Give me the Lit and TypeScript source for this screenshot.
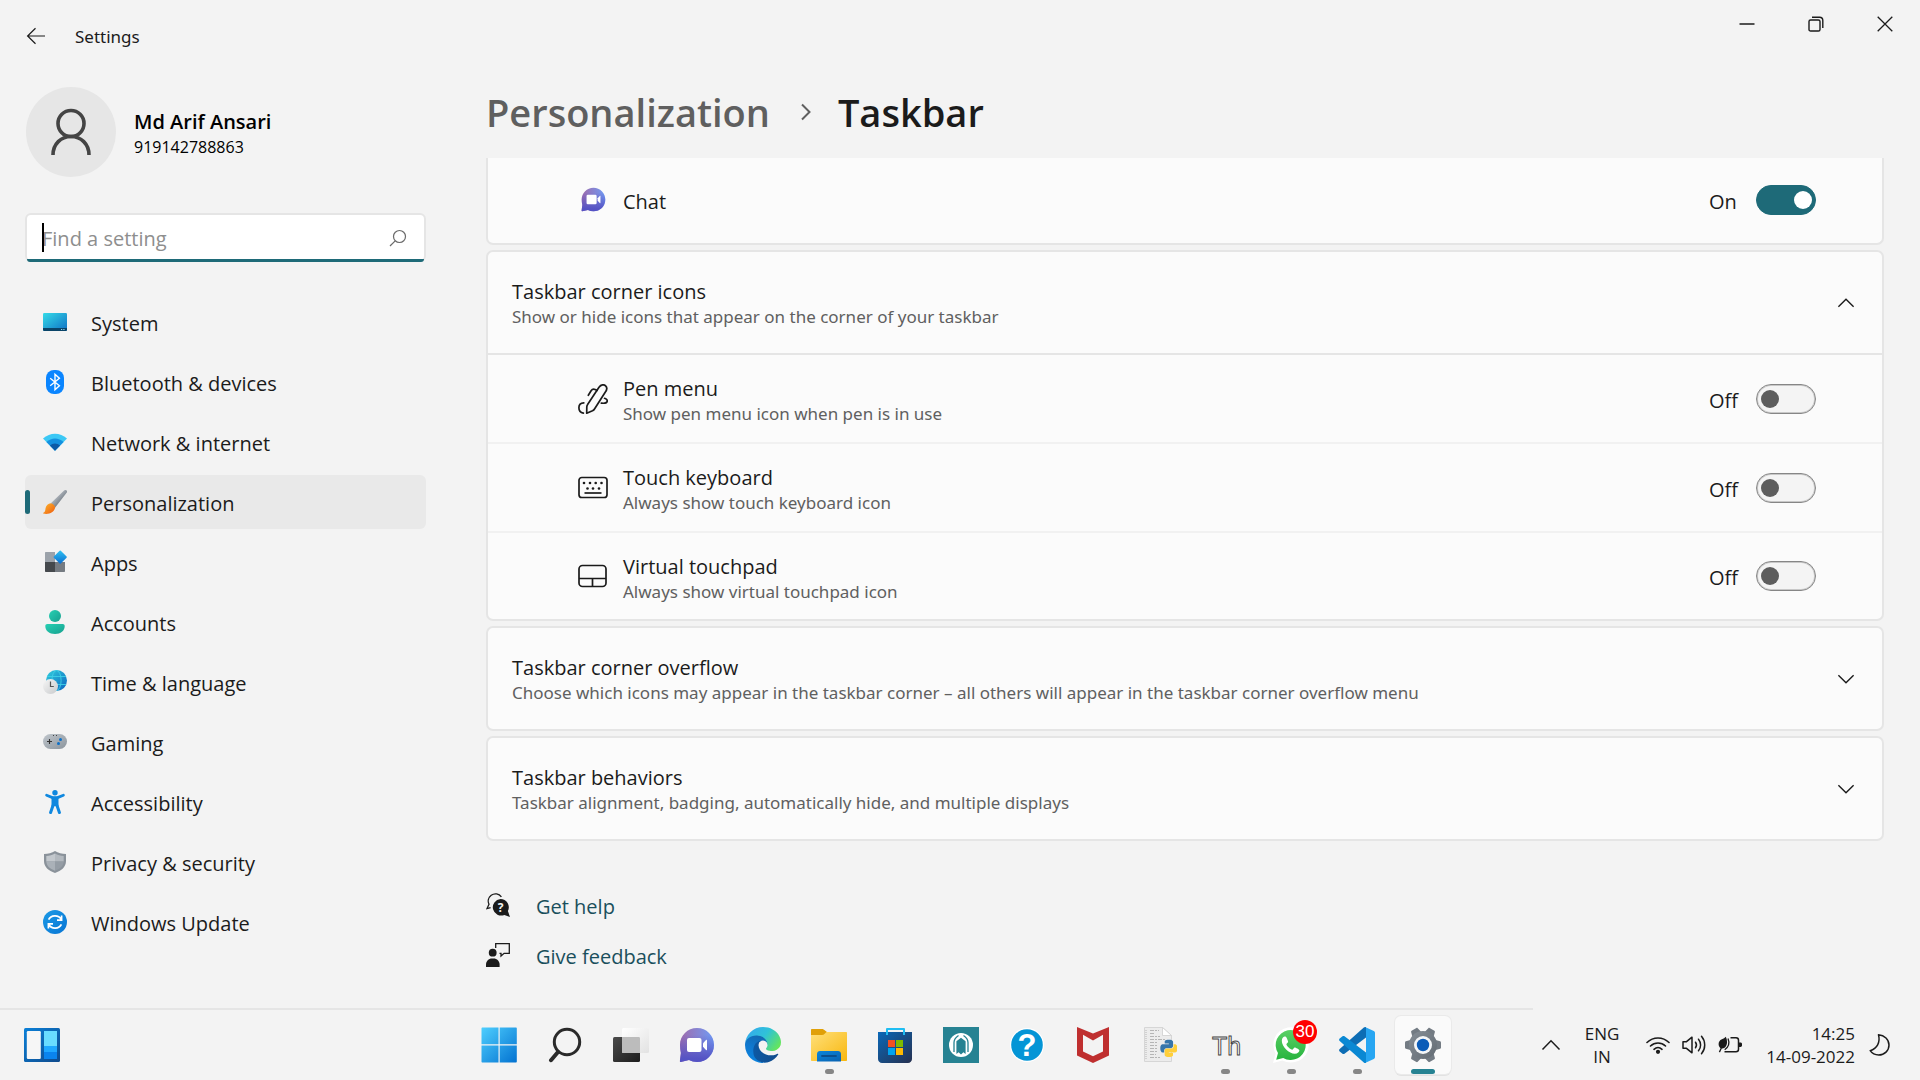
import { LitElement, html, css, svg, TemplateResult, nothing } from "lit";
import { customElement, state } from "lit/decorators.js";
import { classMap } from "lit/directives/class-map.js";

/* ---------- window chrome icons ---------- */

const backIcon = html`<svg width="20" height="20" viewBox="0 0 20 20" fill="none" stroke="#1b1b1b" stroke-width="1.2" aria-hidden="true"><path d="M19 10H2M9.5 2.2 1.6 10l7.9 7.8" /></svg>`;
const minimizeIcon = html`<svg width="16" height="16" viewBox="0 0 16 16" fill="none" stroke="#1b1b1b" stroke-width="1.5" aria-hidden="true"><path d="M.5 8h15" /></svg>`;
const restoreIcon = html`<svg width="16" height="16" viewBox="0 0 16 16" fill="none" stroke="#1b1b1b" stroke-width="1.4" aria-hidden="true"><rect x="1" y="4" width="11" height="11" rx="1.6" /><path d="M4 1.2h7.6c2 0 3.2 1.2 3.2 3.2V12" /></svg>`;
const closeIcon = html`<svg width="16" height="16" viewBox="0 0 16 16" fill="none" stroke="#1b1b1b" stroke-width="1.3" aria-hidden="true"><path d="m.7.7 14.6 14.6M15.3.7.7 15.3" /></svg>`;
const avatarIcon = html`<svg width="42" height="48" viewBox="0 0 42 48" fill="none" stroke="#444" stroke-width="3.6" aria-hidden="true"><circle cx="21" cy="15.5" r="13" /><path d="M3 47C3 36 11 28.500 21 28.500S39 36 39 47" /></svg>`;
const searchIcon = html`<svg width="18" height="18" viewBox="0 0 18 18" fill="none" stroke="#6a6a6a" stroke-width="1.2" aria-hidden="true"><circle cx="10.500" cy="7.500" r="6" /><path d="M6.200 11.800 1 17" /></svg>`;
const crumbIcon = html`<svg width="12" height="18" viewBox="0 0 12 18" fill="none" stroke="#5f5f5f" stroke-width="2" aria-hidden="true"><path d="m2 1.500 7.500 7.500L2 16.500" /></svg>`;
const chevronDown = html`<svg width="18" height="12" viewBox="0 0 18 12" fill="none" stroke="#1b1b1b" stroke-width="1.4" aria-hidden="true"><path d="m1.400 2.300 7.600 7.500 7.600-7.500" /></svg>`;
const chevronUp = html`<svg width="18" height="12" viewBox="0 0 18 12" fill="none" stroke="#1b1b1b" stroke-width="1.4" aria-hidden="true"><path d="M1.400 9.700 9 2.200l7.600 7.500" /></svg>`;

/* ---------- navigation icons ---------- */

const systemIcon = html`<svg width="24" height="24" viewBox="0 0 24 24" aria-hidden="true">
  <defs><linearGradient id="sys" x1="0" y1="0" x2="1" y2="1"><stop offset="0" stop-color="#35dbe8" /><stop offset="1" stop-color="#0e70c4" /></linearGradient></defs>
  <rect y="3" width="24" height="18" rx="1.200" fill="url(#sys)" /><path d="M0 18h24v1.800c0 .7-.5 1.200-1.200 1.200H1.200C.5 21 0 20.500 0 19.800z" fill="#0a4468" />
  <path d="M18 19h1.200v1H18zM20.300 19h1.200v1h-1.200z" fill="#8fd8f2" /></svg>`;
const bluetoothIcon = html`<svg width="24" height="24" viewBox="0 0 24 24" aria-hidden="true">
  <rect x="3" width="18" height="24" rx="8" fill="#0a85ff" /><path d="m7.200 8.300 9.200 7.400-4.400 4V4.300l4.400 4-9.200 7.400" fill="none" stroke="#fff" stroke-width="1.400" /></svg>`;
const networkIcon = html`<svg width="24" height="24" viewBox="0 0 24 24" aria-hidden="true">
  <path d="M0 8.600C7 2.200 17 2.200 24 8.600L12 20.800z" fill="#3cc8f5" /><path d="M3.400 12C8.500 7.300 15.500 7.300 20.600 12L12 20.800z" fill="#1490df" /><path d="M6.900 15.600c3-2.800 7.200-2.800 10.200 0L12 20.800z" fill="#0c5aa6" /></svg>`;
const brushIcon = html`<svg width="24" height="24" viewBox="0 0 24 24" aria-hidden="true">
  <defs><linearGradient id="brh" x1="0" y1="0" x2="1" y2="1"><stop offset="0.300" stop-color="#b9bfc6" /><stop offset="0.700" stop-color="#6f7881" /></linearGradient>
  <linearGradient id="brt" x1="0" y1="0" x2="1" y2="1"><stop offset="0" stop-color="#fdb92d" /><stop offset="1" stop-color="#ee5a10" /></linearGradient></defs>
  <path d="M23.600.4c.7.7.5 1.600 0 2.400L12.200 17.400 7.800 13.200 20.800.7c.9-.8 2.100-1 2.800-.3z" fill="url(#brh)" />
  <path d="M7.800 13.200c2.200.3 4 2 4.400 4.200C11.300 22 6.500 24.800.4 23.600c-.5-.1-.4-.6 0-.8 2-.9 1.700-2.200 2.200-4.800.5-2.700 2.600-4.600 5.200-4.800z" fill="url(#brt)" /></svg>`;
const appsIcon = html`<svg width="24" height="24" viewBox="0 0 24 24" aria-hidden="true">
  <defs><linearGradient id="apd" x1="0" y1="0" x2="1" y2="1"><stop offset="0" stop-color="#2fc3f3" /><stop offset="1" stop-color="#0a6cd0" /></linearGradient></defs>
  <path d="M3 2h9v10H2V3c0-.6.400-1 1-1z" fill="#9ba2aa" /><path d="M2 12h10v10H3c-.6 0-1-.4-1-1z" fill="#45494d" /><path d="M12 12h10v9c0 .6-.4 1-1 1h-9z" fill="#757b82" />
  <rect x="12.300" y="2.200" width="9.800" height="9.800" rx=".8" transform="rotate(45 17.200 7.100)" fill="url(#apd)" /></svg>`;
const accountsIcon = html`<svg width="24" height="24" viewBox="0 0 24 24" aria-hidden="true">
  <defs><linearGradient id="acc" x1="0" y1="0" x2="1" y2="1"><stop offset="0" stop-color="#27d0b4" /><stop offset="1" stop-color="#17a08e" /></linearGradient></defs>
  <circle cx="12" cy="6" r="6" fill="url(#acc)" /><path d="M4.300 14h15.400c1.200 0 2 .8 2 2 0 4.800-4 8-9.700 8s-9.700-3.200-9.700-8c0-1.200.8-2 2-2z" fill="url(#acc)" /></svg>`;
const timeIcon = html`<svg width="24" height="24" viewBox="0 0 24 24" aria-hidden="true">
  <defs><linearGradient id="tgl" x1="0" y1="0" x2="1" y2="1"><stop offset="0" stop-color="#33cfdd" /><stop offset="1" stop-color="#0a63c0" /></linearGradient>
  <linearGradient id="tcl" x1="0" y1="0" x2="1" y2="1"><stop offset="0" stop-color="#f6f6f6" /><stop offset="1" stop-color="#c8cacc" /></linearGradient></defs>
  <circle cx="13.500" cy="10.500" r="10.500" fill="url(#tgl)" /><g fill="none" stroke="#3fd0e6" stroke-width=".9"><ellipse cx="13.500" cy="10.500" rx="4.600" ry="10" /><path d="M4 6.500h19M5 14.500h18" /></g>
  <circle cx="7.500" cy="16.500" r="7.500" fill="url(#tcl)" /><path d="M7.500 11.500v5h3.300" fill="none" stroke="#555" stroke-width="1.200" /></svg>`;
const gamingIcon = html`<svg width="24" height="24" viewBox="0 0 24 24" aria-hidden="true">
  <defs><linearGradient id="gam" x1="0" y1="0" x2="1" y2="1"><stop offset="0" stop-color="#c0c6cc" /><stop offset="1" stop-color="#8b949c" /></linearGradient></defs>
  <rect y="4" width="24" height="15" rx="7.500" fill="url(#gam)" /><path d="M6.500 9v5M4 11.500h5" stroke="#333" stroke-width="1.100" /><circle cx="17.500" cy="9.500" r="1.500" fill="#0c6fc8" /><circle cx="15.500" cy="13.500" r="1.500" fill="#0c6fc8" /><path d="M10 5h1v1h-1zM13 5h1v1h-1z" fill="#444" /></svg>`;
const accessibilityIcon = html`<svg width="24" height="24" viewBox="0 0 24 24" aria-hidden="true">
  <g fill="none" stroke="#1088df" stroke-linecap="round" stroke-linejoin="round"><path d="M3.600 5.300 9.500 7.600h5l5.900-2.300" stroke-width="2.800" /><path d="m10 15.500-2.400 7M14 15.500l2.400 7" stroke-width="3" /></g>
  <path d="M8.500 6.800h7v9.400h-7z" fill="#1088df" /><circle cx="12" cy="2.700" r="2.700" fill="#1088df" /></svg>`;
const shieldIcon = html`<svg width="24" height="24" viewBox="0 0 24 24" aria-hidden="true">
  <path d="M12 1c3 2 7 3 11 3v7c0 6-4.500 9.700-11 12C5.500 20.700 1 17 1 11V4c4 0 8-1 11-3z" fill="#8a929a" /><path d="M12 3.500C9.500 5 6.500 5.800 3.300 6v5.500H12z" fill="#c3c8cd" /><path d="M12 3.500c2.500 1.500 5.500 2.300 8.700 2.500v5.500H12z" fill="#b3b9bf" /><path d="M3.300 11.500c.3 4.300 3.200 7 8.700 9.200v-9.200z" fill="#aab1b8" /><path d="M20.700 11.500c-.3 4.300-3.200 7-8.700 9.200v-9.200z" fill="#959da5" /></svg>`;
const updateIcon = html`<svg width="24" height="24" viewBox="0 0 24 24" aria-hidden="true">
  <defs><linearGradient id="upd" x1="0" y1="0" x2="1" y2="1"><stop offset="0" stop-color="#1b9ae6" /><stop offset="1" stop-color="#0775d4" /></linearGradient></defs>
  <circle cx="12" cy="12" r="12" fill="url(#upd)" /><g fill="none" stroke="#fff" stroke-width="1.700"><path d="M5.600 9.700C7.800 5 15.500 4.500 18.300 9.500M18.600 5.600v4.600H14" /><path d="M18.400 14.300C16.200 19 8.500 19.500 5.700 14.500M5.400 18.400v-4.600H10" /></g></svg>`;

/* ---------- content icons ---------- */

const chatGlyph = (id: string, size: number): TemplateResult => html`<svg width=${size} height=${size} viewBox="0 0 36 36" aria-hidden="true">
  <defs><linearGradient id="${id}a" x1="0" y1="0" x2="1" y2="0"><stop offset="0" stop-color="#a06bab" /><stop offset="1" stop-color="#6f9bf5" /></linearGradient>
  <linearGradient id="${id}b" x1="0" y1="0" x2="0" y2="1"><stop offset="0.200" stop-color="#5553c4" stop-opacity="0" /><stop offset="0.900" stop-color="#5553c4" /></linearGradient></defs>
  <path d="M18 1c9.500 0 17 7.500 17 17s-7.500 17-17 17c-2.800 0-5.500-.7-8-1.900L1.800 35c-.7.100-1-.3-.9-1l1-8C1.300 23.500 1 20.800 1 18 1 8.500 8.500 1 18 1z" fill="url(#${id}a)" />
  <path d="M18 1c9.500 0 17 7.500 17 17s-7.500 17-17 17c-2.800 0-5.500-.7-8-1.900L1.800 35c-.7.100-1-.3-.9-1l1-8C1.300 23.500 1 20.800 1 18 1 8.500 8.500 1 18 1z" fill="url(#${id}b)" />
  <rect x="8" y="11" width="14.500" height="14" rx="2" fill="#fff" /><path d="M24 16.200 27 13c.5-.5 1-.3 1 .4v9.200c0 .7-.5.900-1 .4l-3-3.200z" fill="#fff" /></svg>`;
const penIcon = html`<svg width="30" height="30" viewBox="0 0 30 30" fill="none" stroke="#1b1b1b" stroke-width="1.700" stroke-linejoin="round" stroke-linecap="round" aria-hidden="true">
  <path d="M21 3.200c2-2.600 5-3 6.600-1.400 1.700 1.700 1.300 4.300-.4 6.500L16.500 25c-.5.900-1.200 1.400-2 1.800L8.700 29.200 8.800 23c0-1 .3-1.800.8-2.500z" />
  <path d="m10.300 11.300 2.800-4.500c.9-1.400 2.400-1.900 4-1.300l2 .9" /><path d="M5.800 18.900C3 19 .9 20.800.9 23.700c0 2.800 1.600 4.900 4.500 5.400" /><path d="M26.600 14.300c2.200.8 3 2 2.500 3.300-.6 1.500-2.600 1.900-5.800 1.500" /></svg>`;
const keyboardIcon = html`<svg width="30" height="30" viewBox="0 0 30 30" fill="none" stroke="#1b1b1b" stroke-width="1.700" aria-hidden="true">
  <rect x="1" y="4.500" width="28" height="20" rx="2.800" /><path d="M6.500 20h17" /><g fill="#1b1b1b" stroke="none"><circle cx="6" cy="10" r="1.300" /><circle cx="12" cy="10" r="1.300" /><circle cx="17.700" cy="10" r="1.300" /><circle cx="23.500" cy="10" r="1.300" /><circle cx="9.500" cy="15.500" r="1.300" /><circle cx="15" cy="15.500" r="1.300" /><circle cx="21" cy="15.500" r="1.300" /></g></svg>`;
const touchpadIcon = html`<svg width="30" height="30" viewBox="0 0 30 30" fill="none" stroke="#1b1b1b" stroke-width="1.700" aria-hidden="true"><rect x="1" y="4.500" width="27" height="21" rx="3.500" /><path d="M1 17.500h27M14.500 17.500v8" /></svg>`;
const helpIcon = html`<svg width="24" height="24" viewBox="0 0 24 24" aria-hidden="true">
  <path d="M15.400 3.800C13 .6 8.600-.2 5.200 2.200 2.400 4.300 1.400 8 3 11.200L1 15.600l3.600-1" fill="none" stroke="#1b1b1b" stroke-width="1.300" />
  <path d="M14.500 6a8.300 8.300 0 0 1 7.400 12.100l2.100 5.800-5.600-2A8.300 8.300 0 1 1 14.500 6z" fill="#1b1b1b" /><text x="14.500" y="18.800" font-family="Open Sans, sans-serif" font-weight="700" font-size="12" fill="#f3f3f3" text-anchor="middle">?</text></svg>`;
const feedbackIcon = html`<svg width="24" height="24" viewBox="0 0 24 24" aria-hidden="true">
  <path d="M9.700 5V.7h13.600v9.600h-5.200L15 13v-2.700h-1.500" fill="none" stroke="#1b1b1b" stroke-width="1.300" /><circle cx="6.700" cy="9.700" r="3.900" fill="#1b1b1b" /><path d="M0 24v-2.500C0 18 2.600 15.400 6 15.400h1.600c3.400 0 6 2.600 6 6.100V24z" fill="#1b1b1b" /></svg>`;

/* ---------- taskbar icons ---------- */

const widgetsIcon = html`<svg width="36" height="36" viewBox="0 0 36 36" aria-hidden="true">
  <defs><linearGradient id="wid" x1="0" y1="0" x2="1" y2="1"><stop offset="0" stop-color="#0a80d8" /><stop offset="1" stop-color="#0f4a8c" /></linearGradient></defs>
  <rect y="1" width="36" height="34" rx="1.500" fill="url(#wid)" /><rect x="2.800" y="4" width="14" height="28" rx="1.200" fill="#f6f6f6" /><path d="M20 4h13v15H20z" fill="#69dcff" /><path d="M20 19h13v6H20z" fill="#1fa8ff" /><path d="M20 25h13v7H20z" fill="#0a84ee" /></svg>`;
const startIcon = html`<svg width="36" height="36" viewBox="0 0 36 36" aria-hidden="true">
  <defs><linearGradient id="sta" gradientUnits="userSpaceOnUse" x1="0" y1="0" x2="36" y2="36"><stop offset="0" stop-color="#4fd0ff" /><stop offset="1" stop-color="#0271d0" /></linearGradient></defs>
  <path fill="url(#sta)" d="M1.500.5h16v16.800H.5V1.500c0-.6.400-1 1-1zM18.700.5h16.100c.6 0 1 .4 1 1v15.800H18.700zM.5 18.600h17v16.900h-16c-.6 0-1-.4-1-1zM18.700 18.600h17.100v15.900c0 .6-.4 1-1 1H18.700z" /></svg>`;
const magnifierIcon = html`<svg width="36" height="36" viewBox="0 0 36 36" fill="none" stroke="#2a2a2a" aria-hidden="true"><circle cx="20" cy="15" r="12.700" stroke-width="3" /><path d="m11 25-7 8.200" stroke-width="4" stroke-linecap="round" /></svg>`;
const taskViewIcon = html`<svg width="36" height="36" viewBox="0 0 36 36" aria-hidden="true">
  <defs><linearGradient id="tv1" x1="0" y1="0" x2="1" y2="1"><stop offset="0" stop-color="#4b4b4b" /><stop offset="1" stop-color="#1c1c1c" /></linearGradient>
  <linearGradient id="tv2" x1="0" y1="0" x2="1" y2="1"><stop offset="0" stop-color="#fff" /><stop offset="1" stop-color="#e2e2e2" /></linearGradient></defs>
  <rect x="0" y="10" width="27" height="25" rx="1.500" fill="url(#tv1)" /><rect x="9" y="1" width="27" height="25" rx="1.500" fill="url(#tv2)" /><path d="M9 10h16.500c1 0 1.500.5 1.500 1.500V26H10.500C9.500 26 9 25.500 9 24.500z" fill="#bcbcbc" /></svg>`;
const edgeIcon = html`<svg width="36" height="36" viewBox="4.630 4.920 256 256" aria-hidden="true">
  <defs><linearGradient id="ed1" x1="0" y1="0" x2="1" y2="0"><stop offset="0" stop-color="#0c59a4" /><stop offset="1" stop-color="#114a8b" /></linearGradient>
  <linearGradient id="ed2" x1=".6" y1="0" x2=".3" y2="1"><stop offset="0" stop-color="#1467ae" /><stop offset=".5" stop-color="#0f78cf" /><stop offset="1" stop-color="#0a84e0" /></linearGradient>
  <linearGradient id="ed3" x1="0" y1=".2" x2="1" y2=".7"><stop offset="0" stop-color="#35a8ee" /><stop offset=".5" stop-color="#2fc2d8" /><stop offset="1" stop-color="#66e65a" /></linearGradient></defs>
  <path fill="url(#ed2)" d="M110.340 246.340A79.200 79.200 0 0 1 87.600 225a80.720 80.720 0 0 1 29.530-120c3.120-1.470 8.450-4.130 15.540-4a32.350 32.350 0 0 1 25.690 13 31.880 31.880 0 0 1 6.360 18.660c0-.21 24.460-79.600-80-79.600-43.900 0-80 41.660-80 78.210a130.150 130.150 0 0 0 12.110 56 128 128 0 0 0 156.380 67.110 75.550 75.550 0 0 1-62.780-8z" />
  <path fill="url(#ed1)" d="M235.680 195.460a93.730 93.730 0 0 1-10.540 4.710 101.870 101.870 0 0 1-35.900 6.460c-47.320 0-88.540-32.550-88.540-74.320A31.480 31.480 0 0 1 117.130 105c-42.800 1.800-53.800 46.400-53.800 72.530 0 73.880 68.090 81.370 82.760 81.370 7.910 0 19.840-2.300 27-4.560l1.310-.44a128.340 128.340 0 0 0 66.600-52.800 4 4 0 0 0-5.320-5.640z" />
  <path fill="url(#ed3)" d="M156.940 153.780c-.81 1.050-3.300 2.500-3.300 5.660 0 2.610 1.700 5.120 4.720 7.230 14.380 10 41.490 8.680 41.560 8.680a59.560 59.560 0 0 0 30.270-8.350 61.380 61.380 0 0 0 30.430-52.880c.26-22.410-8-37.310-11.340-43.910C228.090 28.760 182.350 4.920 132.610 4.920a128 128 0 0 0-128 126.200c.48-36.540 36.800-66.050 80-66.050 3.500 0 23.460.34 42 10.070 16.340 8.580 24.900 18.940 30.850 29.210 6.180 10.670 7.280 24.150 7.280 29.520s-2.740 13.330-7.800 19.910z" /></svg>`;
const explorerIcon = html`<svg width="36" height="36" viewBox="0 0 36 36" aria-hidden="true">
  <defs><linearGradient id="fol" x1="0" y1="0" x2="1" y2="1"><stop offset="0" stop-color="#ffe07a" /><stop offset="1" stop-color="#f8b70f" /></linearGradient>
  <linearGradient id="fob" x1="0" y1="0" x2="1" y2="1"><stop offset="0" stop-color="#0a86dc" /><stop offset="1" stop-color="#0a62b0" /></linearGradient></defs>
  <path d="M1 2h10c1 0 1.500.3 2 .8L16 5v5H0V3c0-.6.400-1 1-1z" fill="#e0a008" /><path d="M0 8h11c1 0 2-.4 2.700-1.200L15.500 5H35c.6 0 1 .4 1 1v27c0 .600-.4 1-1 1H1c-.6 0-1-.4-1-1z" fill="url(#fol)" />
  <path d="M9 24h18c1.700 0 3 1.300 3 3v7.500H6V27c0-1.700 1.300-3 3-3z" fill="url(#fob)" /><path d="M11 29h14" stroke="#0a4f8e" stroke-width="1.800" stroke-linecap="round" /></svg>`;
const storeIcon = html`<svg width="36" height="36" viewBox="0 0 36 36" aria-hidden="true">
  <defs><linearGradient id="sto" x1="0" y1="0" x2="1" y2="1"><stop offset="0" stop-color="#0a68b8" /><stop offset="1" stop-color="#26304f" /></linearGradient></defs>
  <path d="M1 5h34v27c0 2.200-1.800 4-4 4H5c-2.200 0-4-1.800-4-4z" fill="url(#sto)" /><path d="M10 8V2h17v6" fill="none" stroke="#1fbdf2" stroke-width="2" stroke-linejoin="round" />
  <path d="M11 13h7v7h-7z" fill="#f25022" /><path d="M19 13h7v7h-7z" fill="#7fba00" /><path d="M11 21h7v7h-7z" fill="#00a4ef" /><path d="M19 21h7v7h-7z" fill="#ffb900" /></svg>`;
const tealAppIcon = html`<svg width="36" height="36" viewBox="0 0 36 36" aria-hidden="true"><path d="M0 0h36v36H0z" fill="#268292" /><circle cx="18" cy="18" r="12" fill="#fff" />
  <g fill="none" stroke="#268292" stroke-width="1.300"><path d="M11 25v-9.500c0-3 1.500-5 4.500-7" /><path d="M25 25v-9.500c0-3-1.500-5-4.500-7" /></g><path d="M13.400 27V14.200L18 10.800l4.600 3.400V27L20.400 25.200 18 27.600l-2.400-2.400z" fill="#268292" /></svg>`;
const questionIcon = html`<svg width="36" height="36" viewBox="0 0 36 36" aria-hidden="true"><circle cx="18" cy="18" r="17" fill="#fff" /><circle cx="18" cy="18" r="15.800" fill="#0495d6" /><text x="18" y="29" font-family="Liberation Sans, sans-serif" font-weight="700" font-size="31" fill="#fff" text-anchor="middle">?</text></svg>`;
const shieldRedIcon = html`<svg width="36" height="36" viewBox="0 0 36 36" aria-hidden="true"><path fill="#bf2f2f" fill-rule="evenodd" d="m2 0 16 6.500L34 0v28.500L18 36 2 28.500zM8 7.800v16.700l10 4.800 10-4.800V7.800l-10 5.600z" /></svg>`;
const pythonFileIcon = html`<svg width="36" height="36" viewBox="0 0 36 36" aria-hidden="true">
  <path d="M3.500.5h18l9 8V34.500h-27z" fill="#ececec" stroke="#d6d6d6" /><path d="M21.500.5V8.500h9z" fill="#fff" stroke="#cfcfcf" stroke-width=".8" />
  <path d="M9 3.500h9M9 6.500h5M9 9.500h10M9 12.500h15M9 15.500h8M9 18.500h7M9 21.500h7M9 24.500h8M9 27.500h6M9 30.500h10" stroke="#b5b5b5" stroke-width="1" stroke-dasharray="4 1 2 1" /><path d="M5 3v30" stroke="#c8c8c8" stroke-width="1.500" stroke-dasharray="1 1" />
  <g transform="translate(18.500 12) scale(.78)"><path d="M11.900 1c-5.600 0-5.200 2.400-5.200 2.400v2.500H12v.8H4.600S1 6.300 1 12s3.100 5.400 3.100 5.400H6v-2.600s-.1-3.100 3.100-3.100h5.300s3 0 3-2.900V4S17.800 1 11.900 1z" fill="#3776ab" />
  <path transform="rotate(180 12 12)" d="M11.900 1c-5.600 0-5.200 2.400-5.200 2.400v2.500H12v.8H4.600S1 6.300 1 12s3.100 5.400 3.100 5.400H6v-2.600s-.1-3.100 3.100-3.100h5.300s3 0 3-2.900V4S17.800 1 11.900 1z" fill="#ffcf3a" /></g></svg>`;
const thonnyIcon = html`<svg width="36" height="36" viewBox="0 0 36 36" aria-hidden="true"><text x="5" y="28" font-family="Liberation Sans, sans-serif" font-size="25" fill="#f6f6f6" stroke="#444" stroke-width=".9">Th</text></svg>`;
const whatsappIcon = html`<svg width="36" height="36" viewBox="0 0 36 36" aria-hidden="true">
  <defs><linearGradient id="wha" x1="0" y1="0" x2="0" y2="1"><stop offset="0" stop-color="#5bd066" /><stop offset="1" stop-color="#27b43e" /></linearGradient></defs>
  <path d="M0 36l2.600-9.400A17.700 17.700 0 1 1 9.500 33.400z" fill="#fff" /><path d="M3.200 32.800 5 26a15 15 0 1 1 5.200 5z" fill="url(#wha)" />
  <path d="M11.800 9.500c-1 0-3 1.300-3 4.300 0 5.800 7.300 13 13 13 3 0 4.600-1.900 4.600-3.500 0-.7-3.900-2.700-4.700-2.700-.8 0-1.500 2.200-2.400 2.200-1.600 0-5.900-4-5.900-5.500 0-.9 1.700-1.500 1.700-2.600 0-.7-1.600-4.700-2.300-5-.2-.2-.6-.2-1-.2z" fill="#fff" /></svg>`;
const vscodeIcon = html`<svg width="36" height="36" viewBox="0 0 36 36" aria-hidden="true">
  <path d="M27 0v10.500L5.500 26.700c-.6.500-1.400.4-2 0L.7 24.500c-.8-.7-.8-1.800 0-2.500L24.800.6C25.400.1 26.200-.1 27 0z" fill="#0d6db4" />
  <path d="M27 36V25.500L5.500 9.300c-.6-.5-1.400-.4-2 0L.7 11.500c-.8.7-.8 1.800 0 2.500l24.100 21.400c.6.500 1.400.7 2.200.600z" fill="#0a88d3" />
  <path d="M26 0 34.800 4c.8.4 1.200 1 1.200 1.800v24.400c0 .8-.4 1.400-1.200 1.800L26 36c.6-.3 1-.9 1-1.600V1.600C27 .9 26.600.3 26 0z" fill="#27a6f2" /></svg>`;
const tooth = (angle: number) => svg`<path transform="rotate(${angle} 18 18)" d="M13 5.500 14.200.8c.2-.5.500-.8 1-.8h5.600c.5 0 .8.300 1 .8L23 5.500z" fill="#737b83" />`;
const gearIcon = html`<svg width="36" height="36" viewBox="0 0 36 36" aria-hidden="true">
  <defs><linearGradient id="gea" x1="0" y1="0" x2="1" y2="1"><stop offset="0" stop-color="#868e96" /><stop offset="1" stop-color="#636b73" /></linearGradient></defs>
  ${[30, 90, 150, 210, 270, 330].map(tooth)}<circle cx="18" cy="18" r="14" fill="url(#gea)" /><circle cx="18" cy="18" r="9" fill="#f4f6f8" /><circle cx="18" cy="18" r="6.200" fill="#0b5cb8" /></svg>`;

/* ---------- tray icons ---------- */

const trayChevron = html`<svg width="20" height="12" viewBox="0 0 20 12" fill="none" stroke="#1b1b1b" stroke-width="1.500" aria-hidden="true"><path d="m1.500 10.500 8.500-8.700 8.500 8.700" /></svg>`;
const wifiIcon = html`<svg width="24" height="24" viewBox="0 0 24 24" fill="none" stroke="#1b1b1b" stroke-width="1.600" stroke-linecap="round" aria-hidden="true"><path d="M1 9.500c6.200-6 15.800-6 22 0M4.500 13c4.300-4.100 10.700-4.100 15 0M8 16.300c2.400-2.200 5.600-2.200 8 0" /><circle cx="12" cy="18.800" r="1.300" fill="#1b1b1b" /></svg>`;
const volumeIcon = html`<svg width="24" height="24" viewBox="0 0 24 24" fill="none" stroke="#1b1b1b" stroke-width="1.500" stroke-linejoin="round" stroke-linecap="round" aria-hidden="true"><path d="M1 8.700h3.500l5.500-4.500v15.600l-5.500-4.500H1z" /><path d="M13.500 9.200c1.200 1.700 1.200 3.900 0 5.600M16.500 6.200c2.800 3.400 2.800 8.200 0 11.600M19.500 3.200c4.300 5 4.300 12.600 0 17.600" /></svg>`;
const batteryIcon = html`<svg width="24" height="24" viewBox="0 0 24 24" aria-hidden="true"><path d="M12.500 4.800h5.500c1.500 0 2.500 1 2.500 2.500v9c0 1.500-1 2.500-2.500 2.500H6.500" fill="none" stroke="#1b1b1b" stroke-width="1.500" /><path d="M21 9.500h1.500c.8 0 1.500.6 1.500 1.400v1.700c0 .800-.7 1.400-1.500 1.400H21z" fill="#1b1b1b" />
  <path d="M7.800 3.800c1.500 3 1.700 6.500.4 9-1 1.900-2.500 2.900-4.400 2.700L2 19.600.8 18.800l1.700-3.500C-.4 13 0 7.500 3.900 6.300c1.600-.5 2.900-1.200 3.900-2.500z" fill="#1b1b1b" /><path d="M10 5.500c1.600 4 .6 8.500-3.300 11.200" fill="none" stroke="#1b1b1b" stroke-width="1.300" /></svg>`;
const moonIcon = html`<svg width="22" height="24" viewBox="0 0 22 24" fill="none" stroke="#1b1b1b" stroke-width="1.500" stroke-linejoin="round" aria-hidden="true"><path d="M9.500 1.800c6 .5 10.500 4.700 10.500 10.200 0 5.700-4.500 10-10.300 10-3.500 0-6.600-1.500-8.500-4.300C8 15.500 11.500 9.500 9.500 1.800z" /></svg>`;

interface NavItem { label: string; icon: TemplateResult; }
interface ToggleRow { id: string; title: string; note: string; icon: TemplateResult; on: boolean; }
interface TaskItem { label: string; icon: TemplateResult; running?: boolean; active?: boolean; badge?: string; }

const NAV: NavItem[] = [
  { label: "System", icon: systemIcon },
  { label: "Bluetooth & devices", icon: bluetoothIcon },
  { label: "Network & internet", icon: networkIcon },
  { label: "Personalization", icon: brushIcon },
  { label: "Apps", icon: appsIcon },
  { label: "Accounts", icon: accountsIcon },
  { label: "Time & language", icon: timeIcon },
  { label: "Gaming", icon: gamingIcon },
  { label: "Accessibility", icon: accessibilityIcon },
  { label: "Privacy & security", icon: shieldIcon },
  { label: "Windows Update", icon: updateIcon },
];

const TASKS: TaskItem[] = [
  { label: "Start", icon: startIcon },
  { label: "Search", icon: magnifierIcon },
  { label: "Task view", icon: taskViewIcon },
  { label: "Chat", icon: chatGlyph("tc", 36) },
  { label: "Edge", icon: edgeIcon },
  { label: "File Explorer", icon: explorerIcon, running: true },
  { label: "Store", icon: storeIcon },
  { label: "Assistant", icon: tealAppIcon },
  { label: "Help", icon: questionIcon },
  { label: "Antivirus", icon: shieldRedIcon },
  { label: "Python file", icon: pythonFileIcon },
  { label: "Thonny", icon: thonnyIcon, running: true },
  { label: "WhatsApp", icon: whatsappIcon, running: true, badge: "30" },
  { label: "Code editor", icon: vscodeIcon, running: true },
  { label: "Settings", icon: gearIcon, active: true },
];

@customElement("app-root")
export class AppRoot extends LitElement {
  static styles = css`
    :host {
      display: flex;
      flex-direction: column;
      min-height: 100vh;
      background: #f3f3f3;
      color: #1b1b1b;
      font: 20px/26px "Open Sans", "Noto Sans", sans-serif;
    }
    *, *::before, *::after { box-sizing: border-box; }
    button, input { font: inherit; color: inherit; margin: 0; }
    button { padding: 0; border: 0; background: none; text-align: left; }
    a { color: inherit; text-decoration: none; }
    svg { display: block; flex: none; }

    .titlebar { display: flex; align-items: center; height: 72px; padding-right: 1px; }
    .back { padding: 8px 26px; }
    .caption { flex: 1; font-family: "Noto Sans", sans-serif; font-size: 17px; padding: 2px 0 0 3px; }
    .controls { display: flex; align-self: flex-start; }
    .control { display: grid; place-items: center; width: 69px; height: 47px; }

    .window { flex: 1; display: grid; grid-template-columns: 426px minmax(0, 1fr); column-gap: 60px; }

    .sidebar { padding: 15px 0 24px 25px; }
    .profile { display: flex; align-items: center; gap: 18px; padding-left: 1px; }
    .avatar { display: grid; place-items: center; width: 90px; height: 90px; border-radius: 50%; background: #e6e6e6; }
    .who { color: #000; padding-top: 3px; }
    .name { font-weight: 600; line-height: 26px; }
    .phone { font-size: 16px; line-height: 24px; }
    .search { position: relative; display: flex; align-items: center; height: 49px; margin: 36px 0 33px; padding: 0 17px 0 15px; border: 2px solid #e5e5e5; border-radius: 6px; background: #fff; }
    .search::after { content: ""; position: absolute; left: 0; right: 0; bottom: -2px; height: 3px; border-radius: 0 0 6px 6px; background: #1e6a78; }
    .find { flex: 1; min-width: 0; border: 0; padding: 2px 0 0; outline: 0; background: none; height: 32px; }
    .find::placeholder { color: #8e8e8e; opacity: 1; }
    .find::-webkit-search-cancel-button { display: none; }
    .caret { position: absolute; left: 15px; top: 8px; width: 2px; height: 29px; background: #000; }
    .nav { display: flex; flex-direction: column; gap: 6px; }
    .item { position: relative; display: flex; align-items: center; gap: 24px; height: 54px; padding: 4px 18px 0; border-radius: 6px; }
    .item svg { margin-top: -4px; }
    .item.current { background: #e9e9e9; }
    .item.current::before { content: ""; position: absolute; left: 0; top: 15px; width: 5px; height: 24px; border-radius: 3px; background: #1e6a78; }

    .main { padding: 0 36px 28px 0; }
    .crumbs { display: flex; align-items: center; height: 86px; padding-bottom: 6px; font-size: 38px; line-height: 50px; font-weight: 600; color: #5f5f5f; }
    .crumbs svg { margin: 0 26px 0 30px; }
    .heading { margin: 0; font: inherit; color: #1b1b1b; }

    .cards { display: flex; flex-direction: column; gap: 5px; }
    .card { border: 2px solid #e5e5e5; border-radius: 7px; background: #fbfbfb; }
    .card.cut { border-top: 0; border-radius: 0 0 7px 7px; }
    .head { display: flex; align-items: center; justify-content: space-between; width: 100%; min-height: 101px; padding: 0 27px 0 24px; }
    .copy { padding-top: 3px; }
    .title, .note { display: block; line-height: 25px; }
    .note { font-family: "Noto Sans", sans-serif; font-size: 17px; color: #606060; }
    .row { display: flex; align-items: center; min-height: 89px; padding: 0 66px 0 90px; border-top: 2px solid #f1f1f1; }
    .row.first { border-top-color: #e5e5e5; }
    .row:last-child { min-height: 88px; }
    .card.cut .row { min-height: 85px; padding-bottom: 2px; border-top: 0; }
    .glyph { display: grid; place-items: center; width: 30px; margin-right: 15px; }
    .row .copy { flex: 1; padding-top: 5px; }
    .card.cut .copy { padding-top: 3px; }
    .status { width: 47px; padding-top: 4px; }
    .switch { appearance: none; display: flex; align-items: center; width: 60px; height: 30px; padding: 0 4px; border: 1px solid #868686; border-radius: 15px; background: #f4f4f4; box-shadow: inset 0 0 0 1px #c8c8c8; }
    .switch::before { content: ""; width: 18px; height: 18px; border-radius: 50%; background: #5d5d5d; }
    .switch:checked { justify-content: flex-end; padding: 0 3px; background: #1e6a78; border-color: #1e6a78; box-shadow: none; }
    .switch:checked::before { background: #fff; }

    .links { display: flex; flex-direction: column; padding-top: 39px; color: #1a4f5c; }
    .link { display: flex; align-items: center; gap: 26px; height: 50px; align-self: flex-start; }
    .link span { padding-top: 3px; }

    .edge { width: calc(80% - 3px); height: 2px; background: #e5e5e5; }
    .taskbar { display: grid; grid-template-columns: 1fr auto 1fr; align-items: center; height: 70px; }
    .widgets { justify-self: start; padding-left: 24px; }
    .tasks { display: flex; padding-left: 2px; }
    .task { position: relative; display: grid; place-items: center; width: 56px; height: 58px; margin: 0 5px; border-radius: 6px; }
    .task.active { background: #fafafa; box-shadow: 0 0 0 1px #eaeaea, 0 2px 0 0 #e2e2e2; }
    .task.running::after, .task.active::after { content: ""; position: absolute; left: 24px; bottom: 0; width: 9px; height: 5px; border-radius: 3px; background: #868686; }
    .task.active::after { left: 16px; width: 24px; background: #268292; }
    .badge { position: absolute; left: 30px; top: 4px; width: 24px; height: 24px; border-radius: 50%; background: #f00; color: #fff; font: 17px/24px "Liberation Sans", sans-serif; text-align: center; }
    .tray { display: flex; align-items: center; justify-self: end; padding-right: 29px; font-size: 17px; line-height: 23px; }
    .lang { margin: 0 27px 0 24px; text-align: center; }
    .quick { display: flex; gap: 12px; margin-right: 24px; }
    .clock { text-align: right; margin-right: 14px; }
  `;

  @state() private current = "Personalization";
  @state() private expanded = true;
  @state() private rows: ToggleRow[] = [
    { id: "pen", title: "Pen menu", note: "Show pen menu icon when pen is in use", icon: penIcon, on: false },
    { id: "keyboard", title: "Touch keyboard", note: "Always show touch keyboard icon", icon: keyboardIcon, on: false },
    { id: "touchpad", title: "Virtual touchpad", note: "Always show virtual touchpad icon", icon: touchpadIcon, on: false },
  ];
  @state() private chat: ToggleRow = { id: "chat", title: "Chat", note: "", icon: chatGlyph("cc", 25), on: true };

  private flip(row: ToggleRow) {
    if (row.id === "chat") this.chat = { ...row, on: !row.on };
    else this.rows = this.rows.map((r) => (r.id === row.id ? { ...r, on: !r.on } : r));
  }

  private renderRow(row: ToggleRow, first: boolean) {
    return html`<div class=${classMap({ row: true, first })}>
      <span class="glyph">${row.icon}</span>
      <label class="copy" for=${row.id}><span class="title">${row.title}</span>${row.note ? html`<span class="note">${row.note}</span>` : nothing}</label>
      <span class="status">${row.on ? "On" : "Off"}</span>
      <input class="switch" type="checkbox" role="switch" id=${row.id} .checked=${row.on} @change=${() => this.flip(row)} />
    </div>`;
  }

  private renderHead(title: string, note: string, open: boolean, toggle?: () => void) {
    return html`<button class="head" aria-expanded=${open ? "true" : "false"} @click=${toggle ?? nothing}>
      <span class="copy"><span class="title">${title}</span><span class="note">${note}</span></span>
      ${open ? chevronUp : chevronDown}
    </button>`;
  }

  render() {
    return html`
      <header class="titlebar">
        <button class="back" aria-label="Back">${backIcon}</button>
        <span class="caption">Settings</span>
        <div class="controls">
          <button class="control" aria-label="Minimize">${minimizeIcon}</button>
          <button class="control" aria-label="Restore">${restoreIcon}</button>
          <button class="control" aria-label="Close">${closeIcon}</button>
        </div>
      </header>

      <div class="window">
        <aside class="sidebar">
          <div class="profile">
            <span class="avatar">${avatarIcon}</span>
            <div class="who"><div class="name">Md Arif Ansari</div><div class="phone">919142788863</div></div>
          </div>
          <div class="search">
            <input class="find" type="search" aria-label="Find a setting" placeholder="Find a setting" />
            <span class="caret"></span>${searchIcon}
          </div>
          <nav class="nav">
            ${NAV.map((n) => html`<a href="#" class=${classMap({ item: true, current: n.label === this.current })}
              @click=${(e: Event) => { e.preventDefault(); this.current = n.label; }}>${n.icon}<span>${n.label}</span></a>`)}
          </nav>
        </aside>

        <main class="main">
          <div class="crumbs"><a href="#">Personalization</a>${crumbIcon}<h1 class="heading">Taskbar</h1></div>
          <div class="cards">
            <section class="card cut">${this.renderRow(this.chat, true)}</section>
            <section class="card">
              ${this.renderHead("Taskbar corner icons", "Show or hide icons that appear on the corner of your taskbar", this.expanded, () => { this.expanded = !this.expanded; })}
              ${this.expanded ? this.rows.map((r, i) => this.renderRow(r, i === 0)) : nothing}
            </section>
            <section class="card">${this.renderHead("Taskbar corner overflow", "Choose which icons may appear in the taskbar corner – all others will appear in the taskbar corner overflow menu", false)}</section>
            <section class="card">${this.renderHead("Taskbar behaviors", "Taskbar alignment, badging, automatically hide, and multiple displays", false)}</section>
          </div>
          <div class="links">
            <a class="link" href="#">${helpIcon}<span>Get help</span></a>
            <a class="link" href="#">${feedbackIcon}<span>Give feedback</span></a>
          </div>
        </main>
      </div>

      <div class="edge"></div>
      <footer class="taskbar">
        <button class="widgets" aria-label="Widgets">${widgetsIcon}</button>
        <div class="tasks">
          ${TASKS.map((t) => html`<button aria-label=${t.label} class=${classMap({ task: true, running: !!t.running, active: !!t.active })}>${t.icon}${t.badge ? html`<span class="badge">${t.badge}</span>` : nothing}</button>`)}
        </div>
        <div class="tray">
          <button aria-label="Show hidden icons">${trayChevron}</button>
          <button class="lang">ENG<br />IN</button>
          <button class="quick" aria-label="Quick settings">${wifiIcon}${volumeIcon}${batteryIcon}</button>
          <button class="clock">14:25<br />14-09-2022</button>
          <button aria-label="Focus assist">${moonIcon}</button>
        </div>
      </footer>
    `;
  }
}
